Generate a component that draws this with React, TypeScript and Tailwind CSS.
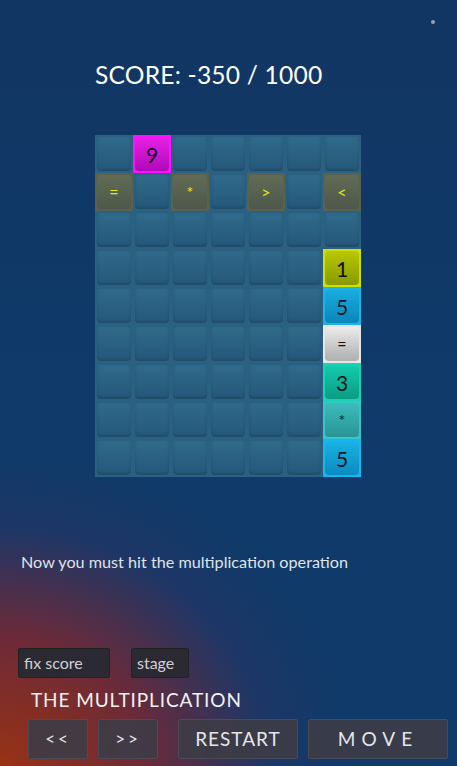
import React from 'react'

type Tile = { label: string; outer: string; inner: string; text: string }

const olive = (label: string): Tile => ({
  label,
  outer: 'bg-[#58624f]',
  inner: 'bg-gradient-to-b from-[#616b56] to-[#4e584a]',
  text: 'text-[#eaea10] text-[16px]',
})

const special: Record<string, Tile> = {
  '0-1': {
    label: '9',
    outer: 'bg-[#ff10ff]',
    inner: 'bg-gradient-to-b from-[#e820e8] to-[#b008b8]',
    text: 'text-[#1a0a1a] text-[21px]',
  },
  '1-0': olive('='),
  '1-2': olive('*'),
  '1-4': olive('>'),
  '1-6': olive('<'),
  '3-6': {
    label: '1',
    outer: 'bg-[#cde000]',
    inner: 'bg-gradient-to-b from-[#b8c800] to-[#8a9a00]',
    text: 'text-[#111] text-[21px]',
  },
  '4-6': {
    label: '5',
    outer: 'bg-[#1ab4e6]',
    inner: 'bg-gradient-to-b from-[#1aaee0] to-[#0a86b8]',
    text: 'text-[#0a1a25] text-[21px]',
  },
  '5-6': {
    label: '=',
    outer: 'bg-[#e6e6e6]',
    inner: 'bg-gradient-to-b from-[#ececec] to-[#aeaeae]',
    text: 'text-[#111] text-[16px]',
  },
  '6-6': {
    label: '3',
    outer: 'bg-[#16d4b4]',
    inner: 'bg-gradient-to-b from-[#14ccae] to-[#0a9c84]',
    text: 'text-[#0a1a18] text-[21px]',
  },
  '7-6': {
    label: '*',
    outer: 'bg-[#38c4c8]',
    inner: 'bg-gradient-to-b from-[#3cbcbc] to-[#2a9494]',
    text: 'text-[#102020] text-[16px]',
  },
  '8-6': {
    label: '5',
    outer: 'bg-[#14b8f0]',
    inner: 'bg-gradient-to-b from-[#1ab2e4] to-[#0a8cc0]',
    text: 'text-[#0a1a25] text-[21px]',
  },
}

function Cell({ r, c }: { r: number; c: number }) {
  const t = special[`${r}-${c}`]
  if (!t) {
    return (
      <div className="w-[38px] h-[38px] p-[2px]">
        <div className="w-full h-full rounded-[4px] bg-gradient-to-b from-[#306a8a] to-[#25587a] shadow-[inset_0_-2px_3px_rgba(0,0,0,0.15)]" />
      </div>
    )
  }
  return (
    <div className={`w-[38px] h-[38px] p-[2px] ${t.outer}`}>
      <div
        className={`w-full h-full rounded-[4px] flex items-center justify-center leading-none ${t.inner} ${t.text}`}
      >
        {t.label}
      </div>
    </div>
  )
}

export default function App() {
  const rows = Array.from({ length: 9 }, (_, i) => i)
  const cols = Array.from({ length: 7 }, (_, i) => i)
  return (
    <div
      className="relative w-[457px] h-[766px] overflow-hidden bg-[#0f3a69] text-white"
      style={{ fontFamily: 'Lato, "Open Sans", sans-serif' }}
    >
      <div className="absolute inset-0 bg-[radial-gradient(ellipse_90%_48%_at_0%_100%,#983214_0%,#6c2a38_35%,rgba(45,50,100,0.45)_65%,transparent_85%)]" />
      <div className="absolute inset-0 bg-gradient-to-b from-[#14335f]/60 via-transparent to-transparent" />

      {/* little star top right */}
      <span className="absolute top-[20px] left-[431px] w-[4px] h-[4px] rounded-full bg-[#9a9cb4] blur-[0.5px]" />

      <div className="relative flex flex-col h-full">
        <div className="pl-[95px] pt-[59px] text-[24.6px] leading-[32px] tracking-[0.2px]">
          SCORE: -350 / 1000
        </div>

        <div className="ml-[95px] mt-[44px] w-[266px] grid grid-cols-7 bg-[#2a6182]">
          {rows.map((r) => cols.map((c) => <Cell key={`${r}-${c}`} r={r} c={c} />))}
        </div>

        <div className="pl-[21px] mt-[73px] text-[16.2px] leading-[24px] text-[#dfe3ea]">
          Now you must hit the multiplication operation
        </div>

        <div className="flex gap-[21px] pl-[18px] mt-[74px]">
          <div className="w-[92px] h-[30px] bg-[#2b2a32] border border-[#222] rounded-[2px] pl-[5px] text-[16px] leading-[28px] text-[#d0d0d4]">
            fix score
          </div>
          <div className="w-[58px] h-[30px] bg-[#2b2a32] border border-[#222] rounded-[2px] pl-[5px] text-[16px] leading-[28px] text-[#d0d0d4]">
            stage
          </div>
        </div>

        <div className="pl-[31px] mt-[8px] text-[19px] leading-[28px] tracking-[0.9px] text-[#f2f2f2]">
          THE MULTIPLICATION
        </div>

        <div className="flex pl-[28px] mt-[5px] text-[#e6e6ea]">
          <button className="w-[60px] h-[40px] bg-[#3d3c46]/90 border border-[#4c4b55] rounded-[2px] text-[17px] tracking-[3px]">
            &lt;&lt;
          </button>
          <button className="ml-[10px] w-[60px] h-[40px] bg-[#3d3c46]/90 border border-[#4c4b55] rounded-[2px] text-[17px] tracking-[3px]">
            &gt;&gt;
          </button>
          <button className="ml-[20px] w-[120px] h-[40px] bg-[#3d3c46]/90 border border-[#4c4b55] rounded-[2px] text-[19px] tracking-[1px]">
            RESTART
          </button>
          <button className="ml-[10px] w-[140px] h-[40px] bg-[#3d3c46]/90 border border-[#4c4b55] rounded-[2px] text-[19px] tracking-[6px]">
            MOVE
          </button>
        </div>
      </div>
    </div>
  )
}
